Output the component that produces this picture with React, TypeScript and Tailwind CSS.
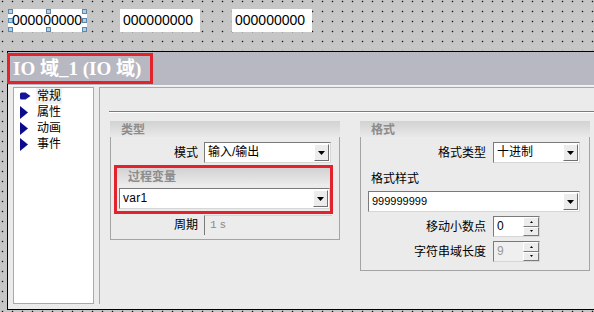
import React from 'react';

const LABEL = "text-[12px] leading-[16px] text-black font-['Liberation_Sans','Noto_Sans_CJK_SC',sans-serif]";

function DropArrow() {
  return (
    <span className="flex h-full w-[15px] shrink-0 items-center justify-center border-l border-t border-l-white border-t-white border-r border-b border-r-[#6f6f6f] border-b-[#6f6f6f] bg-[#ececec]">
      <svg width="7" height="4" viewBox="0 0 7 4">
        <path d="M0 0 H7 L3.5 4 Z" fill="#000" />
      </svg>
    </span>
  );
}

function Combo({ value, className, textClass }: { value: string; className: string; textClass?: string }) {
  return (
    <div className={`flex h-[21px] items-stretch border border-t-[#7a7a7a] border-l-[#7a7a7a] border-r-[#d6d6d6] border-b-[#d6d6d6] bg-white p-[1px] ${className}`}>
      <span className={`flex-1 truncate pl-[2px] ${textClass ?? LABEL} leading-[17px]`}>{value}</span>
      <DropArrow />
    </div>
  );
}

function Spin({ value, disabled }: { value: string; disabled?: boolean }) {
  return (
    <div className={`flex h-[21px] w-[47px] items-stretch border border-t-[#7a7a7a] border-l-[#7a7a7a] border-r-[#d6d6d6] border-b-[#d6d6d6] ${disabled ? 'bg-[#efefef]' : 'bg-white'}`}>
      <span className={`flex-1 pl-[3px] text-[12px] leading-[19px] font-['Liberation_Sans',sans-serif] ${disabled ? 'text-[#9a9a9a]' : 'text-black'}`}>
        {value}
      </span>
      <span className="flex w-[16px] flex-col">
        {[0, 1].map((i) => (
          <span
            key={i}
            className="flex flex-1 items-center justify-center border border-t-white border-l-white border-r-[#7a7a7a] border-b-[#7a7a7a] bg-[#ececec]"
          >
            <svg width="3" height="2" viewBox="0 0 3 2">
              <path d={i === 0 ? 'M0 2 H3 L1.5 0 Z' : 'M0 0 H3 L1.5 2 Z'} fill="#000" />
            </svg>
          </span>
        ))}
      </span>
    </div>
  );
}

function GroupHeader({ title }: { title: string }) {
  return (
    <div className="flex h-[16px] items-center bg-gradient-to-b from-[#d2d2d2] to-[#e9e9e9] pl-[11px]">
      <span className="text-[12px] font-bold leading-none text-[#8c8c8c] font-['Noto_Sans_CJK_SC',sans-serif]">{title}</span>
    </div>
  );
}

function Handle({ className }: { className: string }) {
  return <span className={`absolute h-[5px] w-[5px] border border-[#5b86ad] bg-[#b4cfe6] ${className}`} />;
}

function TreeIcon({ first }: { first?: boolean }) {
  return first ? (
    <svg width="11" height="10" viewBox="0 0 11 10">
      <path d="M1.5 1.5 H5.5 L10.5 5 L5.5 8.5 H1.5 Q0 8.5 0 7 V3 Q0 1.5 1.5 1.5 Z" fill="#14149a" />
    </svg>
  ) : (
    <svg width="11" height="13" viewBox="0 0 11 13">
      <path d="M0 0 L8 6.5 L0 13 Z" fill="#0b0b8c" />
    </svg>
  );
}

const TREE = ['常规', '属性', '动画', '事件'];

export default function App() {
  return (
    <div className="flex h-[312px] w-[594px] flex-col overflow-hidden bg-[#c6c6c6] bg-[radial-gradient(circle_at_2.5px_1.5px,#111_0.6px,transparent_1.1px)] bg-[length:10px_10px]">
      {/* text boxes on the canvas */}
      <div className="flex h-[51px] shrink-0 items-start pt-[9px] text-[14px] leading-[23px] text-black font-['Liberation_Sans',sans-serif]">
        <div className="relative ml-[8px] h-[23px] w-[79px] bg-white pl-[4px]">
          000000000
          <Handle className="left-0 top-0" />
          <Handle className="left-0 top-[9px]" />
          <Handle className="bottom-0 left-0" />
          <Handle className="left-[38px] top-0" />
          <Handle className="bottom-0 left-[38px]" />
          <Handle className="right-0 top-0" />
          <Handle className="right-0 top-[9px]" />
          <Handle className="bottom-0 right-0" />
        </div>
        <div className="ml-[33px] h-[23px] w-[80px] bg-white pl-[3px]">000000000</div>
        <div className="ml-[32px] h-[23px] w-[80px] bg-white pl-[3px]">000000000</div>
      </div>

      {/* property window */}
      <div className="ml-[7px] flex h-[259px] shrink-0 flex-col border-b border-l border-t border-black bg-[#ebebeb]">
        <div className="flex h-[34px] shrink-0 items-start border-b border-b-[#f4f4f4] bg-[#b7b8c2]">
          <div className="-ml-px mt-[1px] flex h-[31px] items-center border-[3px] border-[#e3232c] pl-[3px] pr-[9px]">
            <span className="text-[19px] font-bold leading-none text-white font-['Liberation_Serif','Noto_Sans_CJK_SC',serif]">
              IO 域_1 (IO 域)
            </span>
          </div>
        </div>

        <div className="flex flex-1 items-stretch pb-[5px] pl-[5px] pt-[1px]">
          {/* tree */}
          <div className="w-[81px] shrink-0 border border-[#a9a9a9] bg-white pl-[6px]">
            {TREE.map((t, i) => (
              <div key={t} className="flex h-[16px] items-center">
                <span className="flex w-[16px] items-center">
                  <TreeIcon first={i === 0} />
                </span>
                <span className={`px-[1px] ${LABEL} ${i === 0 ? 'bg-[#f0f0f0]' : ''}`}>{t}</span>
              </div>
            ))}
          </div>

          {/* property page */}
          <div className="ml-[5px] flex-1 border-l border-t border-[#a9a9a9] pl-[9px] pt-[23px]">
            <div className="h-[2px] border-b border-t border-b-white border-t-[#7c7c7c]" />
            <div className="mt-[8px] flex items-start gap-[20px] pl-px">
              {/* 类型 */}
              <div className="w-[230px] shrink-0">
                <GroupHeader title="类型" />
                <div className="border-b border-l border-r border-[#a4a4a4] pb-[4px] pt-[5px]">
                  <div className="flex items-center">
                    <span className={`w-[87px] text-right ${LABEL}`}>模式</span>
                    <Combo value="输入/输出" className="ml-[6px] w-[127px]" />
                  </div>
                  <div className="ml-[3px] mt-[2px] w-[219px] border-[3px] border-[#e3232c] pb-[2px]">
                    <GroupHeader title="过程变量" />
                    <Combo
                      value="var1"
                      className="ml-[2px] mt-[4px] w-[211px]"
                      textClass="text-[12px] tracking-[0.3px] text-black font-['Liberation_Sans',sans-serif]"
                    />
                  </div>
                  <div className="mt-[1px] flex items-center">
                    <span className={`w-[87px] text-right ${LABEL}`}>周期</span>
                    <span className="ml-[6px] h-[20px] w-[128px] border-l border-t border-l-[#7a7a7a] border-t-[#d4d4d4] bg-[#ececec] pl-[5px] text-[11px] leading-[19px] tracking-[3px] text-[#8a8a8a] font-['Liberation_Mono',monospace]">
                      1s
                    </span>
                  </div>
                </div>
              </div>

              {/* 格式 */}
              <div className="w-[230px] shrink-0">
                <GroupHeader title="格式" />
                <div className="border-b border-l border-r border-[#a4a4a4] pb-[8px] pt-[5px]">
                  <div className="flex items-center">
                    <span className={`w-[125px] text-right ${LABEL}`}>格式类型</span>
                    <Combo value="十进制" className="ml-[7px] w-[87px]" />
                  </div>
                  <div className={`mt-[8px] pl-[10px] ${LABEL}`}>格式样式</div>
                  <Combo
                    value="999999999"
                    className="ml-[7px] mt-[4px] w-[212px]"
                    textClass="text-[11px] text-black font-['Liberation_Sans',sans-serif]"
                  />
                  <div className="mt-[4px] flex items-center">
                    <span className={`w-[125px] text-right ${LABEL}`}>移动小数点</span>
                    <span className="ml-[7px]">
                      <Spin value="0" />
                    </span>
                  </div>
                  <div className="mt-[4px] flex items-center">
                    <span className={`w-[125px] text-right ${LABEL}`}>字符串域长度</span>
                    <span className="ml-[7px]">
                      <Spin value="9" disabled />
                    </span>
                  </div>
                </div>
              </div>
            </div>
          </div>
        </div>
      </div>
    </div>
  );
}
